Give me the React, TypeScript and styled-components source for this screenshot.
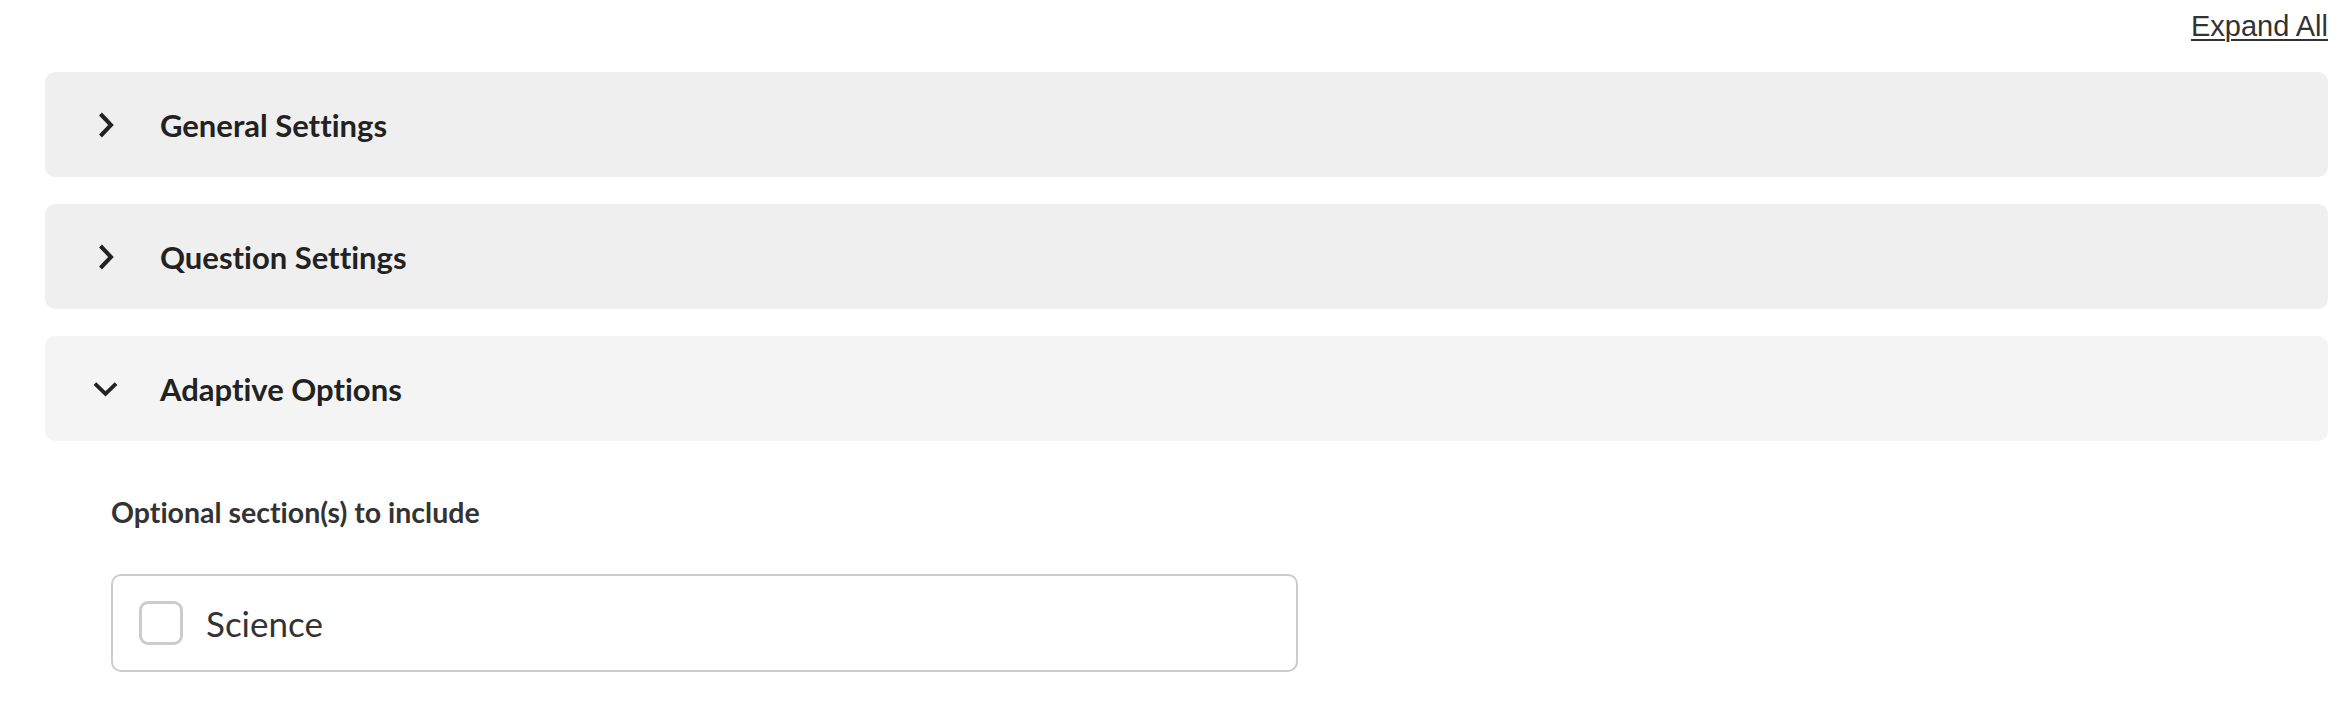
import React from "react";
import styled, { createGlobalStyle } from "styled-components";

const Global = createGlobalStyle`
  html, body { margin: 0; padding: 0; background: #ffffff; }
  body {
    font-family: Lato, "Noto Sans", sans-serif;
    color: #222222;
    font-variant-ligatures: none;
    font-feature-settings: "liga" 0, "clig" 0;
  }
`;

const Page = styled.div`
  display: flex;
  flex-direction: column;
  padding: 0 24px 0 45px;
`;

const TopBar = styled.div`
  display: flex;
  justify-content: flex-end;
  align-items: flex-start;
  height: 72px;
  box-sizing: border-box;
  padding-top: 10px;
`;

const ExpandLink = styled.a`
  font-family: "Liberation Sans", Arial, sans-serif;
  font-size: 29px;
  line-height: 33px;
  color: #333333;
  text-decoration: underline;
  text-decoration-thickness: 2px;
  text-underline-offset: 3px;
  cursor: pointer;
`;

const Sections = styled.div`
  display: flex;
  flex-direction: column;
  gap: 27px;
`;

const Header = styled.div<{ $open?: boolean }>`
  display: flex;
  align-items: center;
  height: 105px;
  box-sizing: border-box;
  padding-left: 48px;
  border-radius: 10px;
  background: ${(p) => (p.$open ? "#f4f4f4" : "#efefef")};
`;

const IconBox = styled.span`
  display: flex;
  align-items: center;
  justify-content: center;
  width: 25px;
  height: 26px;
`;

const Title = styled.span`
  margin-left: 42px;
  font-size: 31px;
  font-weight: 700;
  color: #222222;
`;

const Body = styled.div`
  display: flex;
  flex-direction: column;
  padding: 54px 0 0 66px;
  margin-top: -27px;
`;

const FieldLabel = styled.div`
  font-size: 28.5px;
  font-weight: 700;
  color: #333333;
`;

const OptionBox = styled.label`
  display: flex;
  align-items: center;
  width: 1187px;
  height: 98px;
  box-sizing: border-box;
  margin-top: 45px;
  padding-left: 26px;
  border: 2px solid #cccccc;
  border-radius: 10px;
  background: #ffffff;
`;

const Check = styled.span`
  width: 44px;
  height: 44px;
  box-sizing: border-box;
  border: 3px solid #cccccc;
  border-radius: 9px;
  background: #ffffff;
`;

const OptionText = styled.span`
  margin-left: 23px;
  font-size: 35px;
  color: #333333;
`;

const ChevronRight = () => (
  <svg width="16" height="26" viewBox="0 0 16 26">
    <polyline points="2.5,2 13,13 2.5,24" fill="none" stroke="#222" strokeWidth="4" />
  </svg>
);

const ChevronDown = () => (
  <svg width="26" height="16" viewBox="0 0 26 16">
    <polyline points="2,2.5 13,13 24,2.5" fill="none" stroke="#222" strokeWidth="4" />
  </svg>
);

const Section = ({ title, open }: { title: string; open?: boolean }) => (
  <Header $open={open}>
    <IconBox>{open ? <ChevronDown /> : <ChevronRight />}</IconBox>
    <Title>{title}</Title>
  </Header>
);

export default function App() {
  return (
    <>
      <Global />
      <Page>
        <TopBar>
          <ExpandLink>Expand All</ExpandLink>
        </TopBar>
        <Sections>
          <Section title="General Settings" />
          <Section title="Question Settings" />
          <Section title="Adaptive Options" open />
          <Body>
            <FieldLabel>Optional section(s) to include</FieldLabel>
            <OptionBox>
              <Check />
              <OptionText>Science</OptionText>
            </OptionBox>
          </Body>
        </Sections>
      </Page>
    </>
  );
}
